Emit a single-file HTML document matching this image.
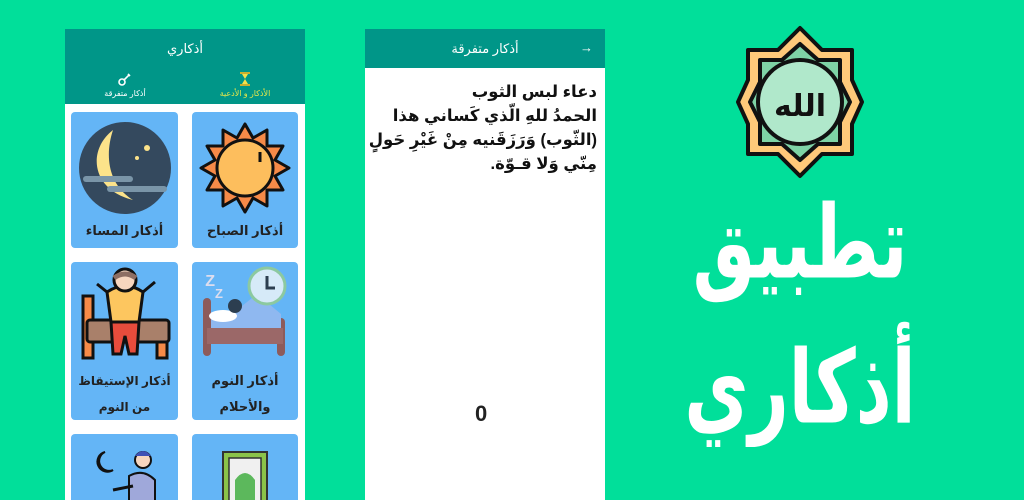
<!DOCTYPE html>
<html><head><meta charset="utf-8"><style>
*{margin:0;padding:0;box-sizing:border-box}
html,body{width:1024px;height:500px;overflow:hidden}
body{background:#01DF9A;position:relative;font-family:"Liberation Sans","DejaVu Sans","Noto Sans CJK SC",sans-serif}
.ph{position:absolute;top:29px;width:240px;height:471px;background:#fff;overflow:hidden}
.hd{background:#009688;color:#fff;height:39px;font-size:13px;display:flex;align-items:center;justify-content:center;direction:rtl}
.tabs{background:#009688;height:36px;position:relative}
.tab{position:absolute;top:0;width:120px;height:36px;text-align:center;font-size:8px;color:#fff}
.card{position:absolute;background:#64B5F6;border-radius:4px;overflow:hidden;text-align:center;direction:rtl;color:#222;font-weight:bold;font-size:13px;white-space:nowrap}
.card svg{position:absolute;left:50%;transform:translateX(-50%)}
.lbl{position:absolute;left:0;right:0;line-height:26px}
</style></head><body>

<div class="ph" style="left:65px">
 <div class="hd" style="height:39px">أذكاري</div>
 <div class="tabs">
  <div class="tab" style="left:0">
   <svg width="16" height="16" viewBox="0 0 16 16" style="margin-top:3px"><circle cx="5" cy="11" r="3" fill="none" stroke="#fff" stroke-width="1.6"/><path d="M7 9 L12 4 M11 3 l2 2" stroke="#fff" stroke-width="1.6"/></svg>
   <div>أذكار متفرقة</div></div>
  <div class="tab" style="left:120px;color:#e6e64a">
   <svg width="12" height="16" viewBox="0 0 12 16" style="margin-top:3px"><rect x="1" y="1" width="10" height="2" fill="#c9b030"/><rect x="1" y="13" width="10" height="2" fill="#c9b030"/><path d="M3 3 L9 3 L6 8 L9 13 L3 13 L6 8Z" fill="#f4e04a"/></svg>
   <div>الأذكار و الأدعية</div>
   <div style="position:absolute;bottom:-2px;left:0;right:0;height:2px;background:#fff"></div></div>
 </div>
 <div class="card" style="left:127px;top:83px;width:106px;height:136px">
  <svg width="96" height="96" viewBox="0 0 96 96" style="top:8px"><g stroke="#111" stroke-width="3" stroke-linejoin="round"><path d="M48 4 L56 18 L70 10 L70 26 L86 26 L78 40 L92 48 L78 56 L86 70 L70 70 L70 86 L56 78 L48 92 L40 78 L26 86 L26 70 L10 70 L18 56 L4 48 L18 40 L10 26 L26 26 L26 10 L40 18Z" fill="#F68A48"/><circle cx="48" cy="48" r="28" fill="#FDBE5D"/></g><path d="M63 32 v10" stroke="#111" stroke-width="3"/></svg>
  <div class="lbl" style="top:106px">أذكار الصباح</div></div>
 <div class="card" style="left:6px;top:83px;width:107px;height:136px">
  <svg width="96" height="96" viewBox="0 0 96 96" style="top:8px"><circle cx="48" cy="48" r="46" fill="#34495E"/><path d="M36 10 C10 30 14 70 56 80 C30 64 28 34 36 10Z" fill="#FCE38A"/><rect x="6" y="56" width="50" height="6" rx="3" fill="#7A95A8"/><rect x="30" y="66" width="60" height="6" rx="3" fill="#7A95A8"/><circle cx="70" cy="28" r="3" fill="#FCE38A"/><circle cx="60" cy="38" r="2" fill="#FCE38A"/></svg>
  <div class="lbl" style="top:106px">أذكار المساء</div></div>
 <div class="card" style="left:127px;top:233px;width:106px;height:158px">
  <svg width="96" height="90" viewBox="0 0 96 90" style="top:4px"><rect x="6" y="32" width="8" height="58" rx="4" fill="#8D5B5B"/><rect x="80" y="52" width="8" height="38" rx="4" fill="#8D5B5B"/><rect x="10" y="62" width="76" height="16" fill="#9B6868"/><path d="M14 46 L40 44 L60 28 L84 48 L84 62 L14 62Z" fill="#8FB8F0"/><ellipse cx="26" cy="50" rx="14" ry="6" fill="#fff"/><circle cx="38" cy="40" r="7" fill="#2C3E50"/><circle cx="70" cy="20" r="18" fill="#D6EAF8" stroke="#8CC9A0" stroke-width="3"/><path d="M70 10 V22 H78" stroke="#2C3E50" stroke-width="3" fill="none"/><text x="18" y="20" font-size="16" fill="#dde" font-weight="bold">Z</text><text x="26" y="32" font-size="13" fill="#dde" font-weight="bold">Z</text></svg>
  <div class="lbl" style="top:106px">أذكار النوم<br>والأحلام</div></div>
 <div class="card" style="left:6px;top:233px;width:107px;height:158px">
  <svg width="96" height="96" viewBox="0 0 96 96" style="top:4px"><g stroke="#111" stroke-width="3"><rect x="6" y="30" width="10" height="62" fill="#F68A48"/><rect x="80" y="58" width="10" height="34" fill="#F68A48"/><rect x="10" y="54" width="82" height="22" rx="3" fill="#A9806A"/><path d="M30 26 L20 18 M66 26 L78 16" /><path d="M30 26 Q48 14 66 26 L62 56 L34 56Z" fill="#FDC65F"/><path d="M34 56 H62 L60 88 H52 L48 70 L44 88 H36Z" fill="#E74C3C"/><circle cx="48" cy="14" r="11" fill="#F7D6BF"/></g><path d="M37 12 Q48 4 59 12" stroke="#8D6E63" stroke-width="5" fill="none"/></svg>
  <div class="lbl" style="top:106px;font-size:12px">أذكار الإستيقاظ<br>من النوم</div></div>
 <div class="card" style="left:127px;top:405px;width:106px;height:80px">
  <svg width="60" height="60" viewBox="0 0 60 60" style="top:14px"><rect x="8" y="4" width="44" height="60" fill="#8BC34A" stroke="#333" stroke-width="2"/><rect x="14" y="10" width="32" height="50" fill="#F0F0F0" stroke="#333" stroke-width="1.5"/><path d="M20 60 V32 Q30 18 40 32 V60Z" fill="#5CB85C"/></svg></div>
 <div class="card" style="left:6px;top:405px;width:107px;height:80px">
  <svg width="80" height="66" viewBox="0 0 80 66" style="top:12px"><path d="M20 6 A10 10 0 1 0 28 24 A8 8 0 1 1 20 6Z" fill="#FDD835" stroke="#111" stroke-width="2"/><circle cx="58" cy="14" r="8" fill="#F7D6BF" stroke="#111" stroke-width="2"/><path d="M50 10 Q58 0 66 10Z" fill="#3F51B5"/><path d="M44 30 Q58 22 70 34 L70 66 L44 66Z" fill="#9FA8DA" stroke="#111" stroke-width="2"/><path d="M28 44 L48 40" stroke="#111" stroke-width="3"/></svg></div>
</div>

<div class="ph" style="left:365px">
 <div class="hd" style="position:relative">أذكار متفرقة<span style="position:absolute;right:12px;top:11px;font-size:13px">→</span></div>
 <div style="direction:rtl;text-align:right;padding:12px 8px 0 6px;font-size:16.5px;font-weight:bold;line-height:24px;color:#111;white-space:nowrap">دعاء لبس الثوب<br>الحمدُ للهِ الّذي كَساني هذا<br>(الثّوب) وَرَزَقَنيه مِنْ غَيْرِ حَولٍ<br>مِنّي وَلا قـوّة.</div>
 <div style="position:absolute;left:110px;top:372px;font-size:22px;font-weight:bold;color:#222">0</div>
</div>

<svg style="position:absolute;left:734px;top:24px" width="132" height="156" viewBox="0 0 132 156">
 <g stroke="#111" stroke-width="4" stroke-linejoin="round">
  <path d="M66 4 L88 26 L118 26 L118 56 L128 78 L118 100 L118 130 L88 130 L66 152 L44 130 L14 130 L14 100 L4 78 L14 56 L14 26 L44 26Z" fill="#FFC97A"/>
  <path d="M66 20 L84 36 L106 36 L106 58 L116 78 L106 98 L106 120 L84 120 L66 136 L48 120 L26 120 L26 98 L16 78 L26 58 L26 36 L48 36Z" fill="#7FD3A6"/>
  <circle cx="66" cy="78" r="42" fill="#B0E8CB"/>
 </g>
 <text x="66" y="92" text-anchor="middle" font-size="30" font-weight="bold" fill="#111" font-family="DejaVu Sans,sans-serif">الله</text>
</svg>
<div style="position:absolute;left:650px;width:300px;top:170px;text-align:center;color:#fff;font-weight:bold;font-size:70px;line-height:100px;direction:rtl;font-family:'DejaVu Sans',sans-serif;transform:scaleY(1.45);transform-origin:top center">تطبيق<br>أذكاري</div>
</body></html>
